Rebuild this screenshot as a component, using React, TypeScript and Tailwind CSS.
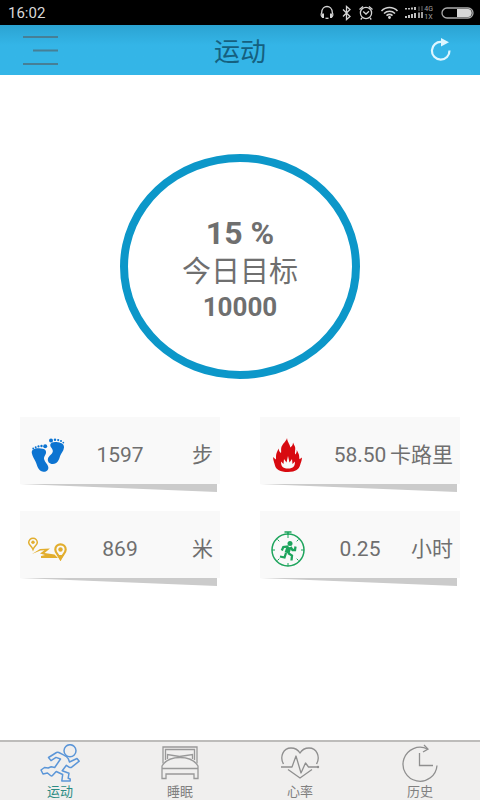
import type { ReactNode } from "react";

function StatusIcons() {
  return (
    <div className="flex items-center text-[#d4d4d4]">
      <svg width="98" height="25" viewBox="320 0 98 25" fill="none" stroke="currentColor" strokeWidth="1.3" aria-hidden="true">
        <path d="M323 17.500c-2-1-2.300-3-1.300-5C322 4.500 332 4.500 332.300 12.500c1 2 .7 4-1.300 5" />
        <path d="M323 13.500v4.500M331 13.500v4.500" strokeWidth="2" />
        <path d="M325.500 18.300h3" />
        <path d="M343 9.500l7 7-3.500 3V6.500l3.500 3-7 7" />
        <circle cx="366" cy="13" r="5.600" />
        <path d="M363.200 11.500L366 14l3-2.800M359.500 9.500l3.500-3M372.500 9.500l-3.500-3M362 18l-1.300 1.500M370 18l1.300 1.500" />
        <path d="M381.500 11c4.500-4.600 11.500-4.600 16 0M384 13.500c3.200-3 8-3 11 0M386.500 15.700c2-1.600 4.200-1.600 6 0" strokeWidth="1.600" />
        <circle cx="389.500" cy="17.500" r="0.800" fill="currentColor" />
        <path d="M406 8v1.500M409 8v1.500M412 7.500v2M415 7v3" strokeWidth="1.800" />
        <path d="M406 16v2M409 15v3M412 14v4M415 13v5" strokeWidth="1.800" />
      </svg>
      <svg width="6" height="25" viewBox="0 0 6 25" fill="none" aria-hidden="true">
        <path d="M1 6.500V11M4 6v5" stroke="#444" strokeWidth="1.500" />
        <path d="M1 12.500V18M4 12v6" stroke="currentColor" strokeWidth="1.500" />
      </svg>
      <div className="mr-2 flex flex-col text-[7px] leading-[8px] text-[#a0a0a0]">
        <span>4G</span>
        <span>1X</span>
      </div>
      <svg width="33" height="12" viewBox="0 0 33 12" aria-hidden="true">
        <rect x="1" y="1" width="31" height="10" rx="5" fill="none" stroke="#aaa" strokeWidth="1.300" />
        <path d="M16 2h11c5 0 5 8 0 8H16z" fill="#d8d8d8" />
      </svg>
    </div>
  );
}

function FeetIcon() {
  return (
    <svg width="34" height="34" viewBox="0 0 34 34" fill="#0d74d1" aria-hidden="true">
      <path d="M.8 15C.3 11.500 3.500 10 8 10.300c5.500.2 7.500 1.700 7 4.700-.4 2.400-2.500 3.500-1.800 6.500.7 3 3.600 4.600 4.100 7.500.5 3-2 5-5 4.700-5.300-.5-5.900-6-7.800-10.200C3.300 20.700 1.300 18.300.8 15z" />
      <circle cx="14.200" cy="8.200" r="2" />
      <circle cx="10.500" cy="8" r="1.200" />
      <circle cx="7.500" cy="8.400" r="1.100" />
      <circle cx="4.700" cy="9.200" r="1" />
      <circle cx="2.200" cy="10.500" r="0.900" />
      <path d="M19.300 6.500C19.800 4 23.500 3.500 27 4.200c3.800.7 6.300 2 6 5.300-.3 3.500-2.900 5.500-3.900 8.500-1.200 4-2.600 8-7.300 8-3.500 0-5.600-2.500-4.800-5.500.8-2.800 4.300-4 4.800-7 .5-2.800-2.900-4-2.500-7z" />
      <circle cx="20" cy="2.400" r="2" />
      <circle cx="24" cy="1.700" r="1.200" />
      <circle cx="27.200" cy="2.100" r="1.100" />
      <circle cx="30" cy="3.100" r="1" />
      <circle cx="32.300" cy="4.600" r="0.900" />
    </svg>
  );
}

function FlameIcon() {
  return (
    <svg width="30" height="34" viewBox="0 0 30 34" aria-hidden="true">
      <path
        d="M14 0c-.5 3-5 6-5.800 10-.3 2 .2 3.500-.2 5C6.500 14.500 6 12.500 5.500 10.500 4.800 13 3 15 3 18c0 1.500.2 2.500-.2 3.500L0 19c.3 4 1.500 6 2 8.500C3 31.500 7 34 15 34s11-3 12-6.500c.6-2.500 1.800-4 2-8l-2.500 1.700c-.5-2 0-4.200-1.300-6.200l-1.400-3c0 2-.5 3.500-1.600 4.500-.8-3.500 1-6-.7-8.800L20 4.500c0 2.500-1.200 3.800-2.700 5C17 6 14.500 4.500 14 0z"
        fill="#d80a10"
      />
      <path
        d="M15 18l-1.500 6.500L11 21l-.5 5L8 23.500C8 28 9.500 30.500 15 30.500s7-2.500 7-7L19.500 26l-.5-5-2.500 3.500z"
        fill="#f9f9f9"
      />
    </svg>
  );
}

function RouteIcon() {
  return (
    <svg width="40" height="24" viewBox="0 0 40 24" aria-hidden="true">
      <g fill="none" stroke="#e2ae2e">
        <path d="M6 12.500C4.500 9 1.700 8 1.700 5.500a4.300 4.300 0 0 1 8.600 0C10.300 8 7.500 9 6 12.500z" strokeWidth="1.500" />
        <path d="M33.500 22c-2.500-5-5.200-6-5.200-9.500a5.200 5.200 0 0 1 10.400 0c0 3.500-2.700 4.500-5.200 9.500z" strokeWidth="2.200" />
      </g>
      <g fill="#e2ae2e">
        <circle cx="6" cy="5.300" r="1.700" />
        <circle cx="33.500" cy="12.500" r="2.200" />
        <path d="M5 17l8-5 10-.5-5.500 4.500 10 1.500L31 21H14v-2l4-1-5-1.500 4.500-3.200-4 .2z" />
        <path d="M29.800 18l3.700 5.500L37 18z" />
      </g>
    </svg>
  );
}

function StopwatchIcon() {
  return (
    <svg width="34" height="36" viewBox="0 0 34 36" fill="none" stroke="#1da45c" aria-hidden="true">
      <circle cx="17" cy="19" r="16" strokeWidth="1.500" />
      <path d="M13.500 1h7M17 1v3" strokeWidth="1.600" />
      <path d="M17 4v3M17 32v3M1 19h3M30 19h3M6.500 8.500l1.800 1.800M27.500 8.500l-1.800 1.800M6.500 29.500l1.800-1.800M27.500 29.500l-1.800-1.800" />
      <circle cx="19" cy="12.500" r="2.500" fill="#1da45c" stroke="none" />
      <path d="M18 16l-2 6" strokeWidth="5" />
      <path d="M17.500 15.300l-5.200.7-1.500 3.500M19.500 16l2 3h2.500l.5-3.500M17 22l4 2.500-.5 5M15 22l-1.500 4.500-4.500-1" strokeWidth="2.300" />
    </svg>
  );
}

function RunIcon() {
  return (
    <svg width="40" height="38" viewBox="0 0 40 38" fill="none" stroke="#5b96d8" strokeWidth="1.500" strokeLinejoin="round" aria-hidden="true">
      <circle cx="30" cy="6.700" r="6" />
      <path d="M8.500 13.500l8-5c.8-.4 1.500-.4 2.300 0l4.700 2.300c2.500 1.200 4 2.200 4.800 4l1.200 3.200 7.500-3.500 2.200 2.700-7.500 6c-.8.600-1.500.5-2.300.1l-3-2-4.200 5.400 6.800 2.500-.8 5 2 .8V37h-8.400l.9-6.500-6.500-3-3.500 3.800c-.6.700-1.500.8-2.200.2l-3-2.500-4.500 1L1 26l3.500-2.500 3.700.5 3-1.200 3.500.7 5.800-8.500-4.500-1.600-5 3.200z" />
    </svg>
  );
}

function BedIcon() {
  return (
    <svg width="38" height="34" viewBox="0 0 38 34" fill="none" stroke="#999" strokeWidth="1.300" aria-hidden="true">
      <path d="M2 17.500V1h34v16.500M4.500 14V3.500h29V14" />
      <path d="M6.500 13V8.500l12 2 13-2V13" />
      <path d="M1 20c3-5 9-8.500 18-8.500S34 15 37 20v12.500h-4V28H5v4.500H1zM1 22.500h36" />
    </svg>
  );
}

function HeartIcon() {
  return (
    <svg width="40" height="32" viewBox="0 0 40 32" fill="none" stroke="#8f8f8f" strokeWidth="1.300" aria-hidden="true">
      <path d="M3.500 17C-.5 10 3 1 11 1c4 0 7 1.700 9 5 2-3.300 5-5 9-5 8 0 11.500 9 7.500 16M8 22.500L20 31l12-8.500" />
      <path d="M1 20h11l4-11 5 17 4.500-10 3 4H38" strokeLinejoin="round" />
      <circle cx="38" cy="20" r="1.200" fill="#8f8f8f" stroke="none" />
    </svg>
  );
}

function HistoryIcon() {
  return (
    <svg width="36" height="38" viewBox="0 0 36 38" fill="none" stroke="#8f8f8f" strokeWidth="1.300" aria-hidden="true">
      <path d="M35 21.500A17 17 0 1 1 25.500 5M17.500 9v12.500H31" />
      <path d="M22 1l4 4-5 3" />
    </svg>
  );
}

const STATS = [
  { name: "steps", value: "1597", unit: "步", icon: <FeetIcon />, iconBox: "pl-1" },
  { name: "calories", value: "58.50", unit: "卡路里", icon: <FlameIcon />, iconBox: "pl-1.5" },
  { name: "distance", value: "869", unit: "米", icon: <RouteIcon />, iconBox: "pl-0" },
  { name: "time", value: "0.25", unit: "小时", icon: <StopwatchIcon />, iconBox: "pl-1" },
];

const TABS = [
  { label: "运动", icon: <RunIcon />, active: true },
  { label: "睡眠", icon: <BedIcon />, active: false },
  { label: "心率", icon: <HeartIcon />, active: false },
  { label: "历史", icon: <HistoryIcon />, active: false },
];

function StatCard({
  value,
  unit,
  icon,
  iconBox,
}: {
  value: string;
  unit: string;
  icon: ReactNode;
  iconBox: string;
}) {
  return (
    <div>
      <div className="grid h-[67px] grid-cols-[1fr_auto_1fr] items-center bg-[#f9f9f9] px-[7px] pt-2 text-[21px] text-[#6f6f6f]">
        <div className={iconBox}>{icon}</div>
        <span className="pt-0.5">{value}</span>
        <span className="whitespace-nowrap pt-0.5 text-right">{unit}</span>
      </div>
      <div className="mr-[3px] h-2 bg-[#cbcbcb] [clip-path:polygon(0_0,100%_0,100%_100%)]" />
    </div>
  );
}

export default function App() {
  return (
    <div className="flex min-h-screen flex-col bg-white font-['Roboto','Noto_Sans_CJK_SC',sans-serif]">
      <div className="flex h-[25px] items-center justify-between bg-black pl-2 pr-1.5">
        <span className="pt-0.5 text-[15px] text-[#d8d8d8]">16:02</span>
        <StatusIcons />
      </div>
      <header className="grid h-[50px] grid-cols-3 items-center bg-[#33b5e5] bg-linear-to-b from-[#2ba3d2] to-[#34b5e7] to-40% px-[22px]">
        <button type="button" aria-label="Menu" className="w-9">
          <svg width="36" height="30" viewBox="0 0 36 30" stroke="#467f96" strokeWidth="2" aria-hidden="true">
            <path d="M1 2h35M11 15.500h25M1 29h35" />
          </svg>
        </button>
        <h1 className="pt-1 text-center text-[26px] text-[#15607f]">运动</h1>
        <button type="button" aria-label="Refresh" className="justify-self-end pr-1.5">
          <svg width="22" height="24" viewBox="0 0 22 24" fill="none" aria-hidden="true">
            <path d="M19.500 12.500A8.800 8.800 0 1 1 11.500 4" stroke="#def6ff" strokeWidth="2.200" />
            <path d="M11 0l8 4.300-8 4.200z" fill="#def6ff" />
          </svg>
        </button>
      </header>

      <main className="flex-1 px-5 pt-[79px]">
        <div className="mx-auto flex h-[225px] w-60 flex-col items-center justify-center rounded-[50%] border-8 border-[#0c97c9] pt-[3px] text-[#6f6f6f]">
          <p className="text-[32px] font-bold leading-[38px]">15 %</p>
          <p className="text-[29px] leading-10">今日目标</p>
          <p className="text-[26px] font-bold leading-[30px]">10000</p>
        </div>
        <div className="mt-[38px] grid grid-cols-2 gap-x-10 gap-y-[19px]">
          {STATS.map((s) => (
            <StatCard key={s.name} value={s.value} unit={s.unit} icon={s.icon} iconBox={s.iconBox} />
          ))}
        </div>
      </main>

      <nav className="grid h-[60px] grid-cols-4 border-t-2 border-[#bdbcba] bg-[#f0efee]">
        {TABS.map((tab) => (
          <button key={tab.label} type="button" className="flex flex-col items-center">
            <span className="flex h-[42px] items-center">{tab.icon}</span>
            <span className={tab.active ? "text-[13px] leading-4 text-[#2c8c84]" : "text-[13px] leading-4 text-[#808080]"}>
              {tab.label}
            </span>
          </button>
        ))}
      </nav>
    </div>
  );
}
